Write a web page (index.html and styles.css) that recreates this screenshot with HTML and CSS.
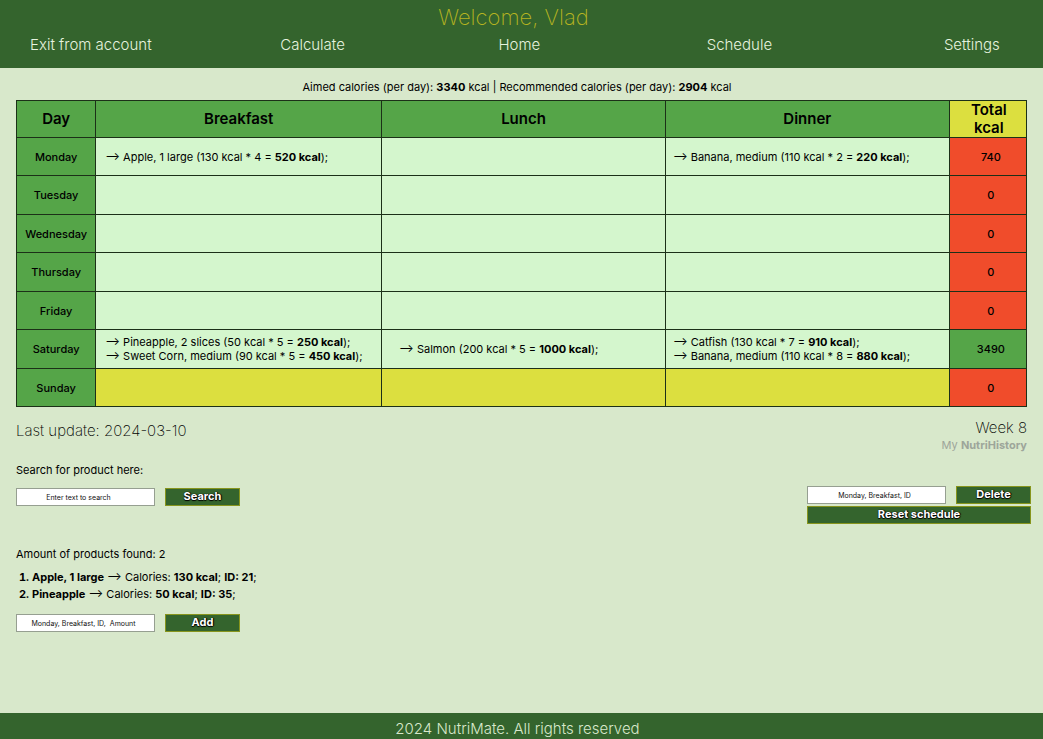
FILE: index.html
```html
<!DOCTYPE html>
<html lang="en">
<head>
<meta charset="utf-8">
<title>NutriMate</title>
<link rel="stylesheet" href="styles.css">
</head>
<body>
<header class="header">
  <h1 class="welcome">Welcome, Vlad</h1>
  <nav class="nav">
    <a href="#">Exit from account</a>
    <a href="#">Calculate</a>
    <a href="#">Home</a>
    <a href="#">Schedule</a>
    <a href="#">Settings</a>
  </nav>
</header>
<main class="main">
  <p class="goals">Aimed calories (per day): <b>3340</b> kcal | Recommended calories (per day): <b>2904</b> kcal</p>
  <table class="schedule">
    <colgroup><col class="col-day"><col class="col-breakfast"><col class="col-meal"><col class="col-meal"><col class="col-total"></colgroup>
    <thead>
      <tr><th scope="col">Day</th><th scope="col">Breakfast</th><th scope="col">Lunch</th><th scope="col">Dinner</th><th scope="col" class="total-head">Total kcal</th></tr>
    </thead>
    <tbody>
      <tr><th scope="row">Monday</th><td>⟶ Apple, 1 large (130 kcal * 4 = <b>520 kcal</b>);</td><td></td><td class="dinner">⟶ Banana, medium (110 kcal * 2 = <b>220 kcal</b>);</td><td class="total">740</td></tr>
      <tr><th scope="row">Tuesday</th><td></td><td></td><td></td><td class="total">0</td></tr>
      <tr><th scope="row">Wednesday</th><td></td><td></td><td></td><td class="total">0</td></tr>
      <tr><th scope="row">Thursday</th><td></td><td></td><td></td><td class="total">0</td></tr>
      <tr><th scope="row">Friday</th><td></td><td></td><td></td><td class="total">0</td></tr>
      <tr><th scope="row">Saturday</th><td>⟶ Pineapple, 2 slices (50 kcal * 5 = <b>250 kcal</b>);<br>⟶ Sweet Corn, medium (90 kcal * 5 = <b>450 kcal</b>);</td><td class="lunch">⟶ Salmon (200 kcal * 5 = <b>1000 kcal</b>);</td><td class="dinner">⟶ Catfish (130 kcal * 7 = <b>910 kcal</b>);<br>⟶ Banana, medium (110 kcal * 8 = <b>880 kcal</b>);</td><td class="total reached">3490</td></tr>
      <tr class="today"><th scope="row">Sunday</th><td></td><td></td><td></td><td class="total">0</td></tr>
    </tbody>
  </table>
  <div class="summary">
    <p class="updated">Last update: 2024-03-10</p>
    <div class="week">
      <p class="week-number">Week 8</p>
      <a class="history" href="#">My <b>NutriHistory</b></a>
    </div>
  </div>
  <div class="tools">
    <section class="products">
      <label class="caption" for="search">Search for product here:</label>
      <form class="form">
        <input class="field search-field" id="search" type="text" placeholder="Enter text to search">
        <button class="button" type="button">Search</button>
      </form>
      <p class="caption found">Amount of products found: 2</p>
      <ol class="results">
        <li><b>Apple, 1 large</b> ⟶ Calories: <b>130 kcal</b>; <b>ID: 21</b>;</li>
        <li><b>Pineapple</b> ⟶ Calories: <b>50 kcal</b>; <b>ID: 35</b>;</li>
      </ol>
      <form class="form">
        <input class="field" type="text" aria-label="Product to add" placeholder="Monday, Breakfast, ID,  Amount">
        <button class="button" type="button">Add</button>
      </form>
    </section>
    <section class="edit">
      <form class="form">
        <input class="field" type="text" aria-label="Product to delete" placeholder="Monday, Breakfast, ID">
        <button class="button" type="button">Delete</button>
      </form>
      <button class="button reset" type="button">Reset schedule</button>
    </section>
  </div>
</main>
<footer class="footer">2024 NutriMate. All rights reserved</footer>
</body>
</html>
```
FILE: styles.css
```css
* { box-sizing: border-box; }

body {
  margin: 0;
  min-height: 100vh;
  display: flex;
  flex-direction: column;
  background: #d8e8cb;
  color: #000;
  font-family: Inter, "Liberation Sans", sans-serif;
  font-size: 11px;
  line-height: 14px;
}

h1, p, ol { margin: 0; padding: 0; }
b { font-weight: 700; }
a { color: inherit; text-decoration: none; }

.header {
  background: #34642d;
  color: #e6f3df;
  padding: 3px 0 13px 30px;
}

.welcome {
  margin-right: 46px;
  text-align: center;
  color: #b5b321;
  font-size: 22px;
  line-height: 28px;
  font-weight: 200;
}

.nav {
  display: grid;
  grid-template-columns: 250fr 218fr 208fr 237fr 99fr;
  padding-top: 4px;
  font-size: 15px;
  line-height: 20px;
  font-weight: 300;
}

.main { flex: 1; padding: 12px 16px 0; }

.goals { text-align: center; padding: 0 9px 6px 0; }

.schedule {
  width: 100%;
  table-layout: fixed;
  border-collapse: collapse;
}

.col-day { width: 79px; }
.col-breakfast { width: 28.3%; }
.col-meal { width: 28.1%; }
.col-total { width: 77px; }

.schedule th, .schedule td {
  border: 1px solid #1c3018;
  padding: 0;
  height: 38px;
}

.schedule tbody tr:nth-child(even) > * { height: 39px; }
.schedule th { background: #55a548; font-weight: 500; }

.schedule thead th {
  height: 37px;
  font-size: 15px;
  line-height: 18px;
  font-weight: 600;
}

.schedule thead .total-head { background: #dcdf3f; padding: 0 14px 0 16px; }
.schedule td { background: #d4f6cd; padding-left: 9px; }
.schedule .lunch { padding-left: 17px; }
.schedule .dinner { padding-left: 7px; }
.schedule .today td { background: #dcdf3f; }

.schedule .total, .schedule .today .total {
  background: #f04c2b;
  padding: 0 0 0 6px;
  text-align: center;
  font-weight: 500;
}

.schedule .total.reached { background: #55a548; }

.summary {
  display: flex;
  justify-content: space-between;
  padding-top: 11px;
}

.updated, .week-number {
  font-size: 15px;
  line-height: 20px;
  font-weight: 200;
}

.updated { padding-top: 3px; }
.week { text-align: right; }
.history { color: #9da59a; }

.tools {
  display: flex;
  justify-content: space-between;
  align-items: flex-start;
  padding-top: 11px;
}

.caption { display: block; }
.form { display: flex; gap: 10px; }
.products .form { padding-top: 11px; }
.found { padding-top: 41px; }

.field {
  width: 139px;
  height: 18px;
  padding: 0 4px 0 0;
  border: 1px solid #969f91;
  background: #fff;
  text-align: center;
  font-family: inherit;
  font-size: 7px;
}

.search-field { padding-right: 14px; }
.field::placeholder { color: #111; opacity: 1; }

.button {
  width: 75px;
  height: 18px;
  padding: 0 0 2px;
  border: 1px solid #87951d;
  background: #34642d;
  color: #fff;
  font-family: inherit;
  font-size: 11px;
  line-height: 14px;
  font-weight: 700;
  text-shadow: 0 0 1px #000, 0 1px 1px #000, 1px 0 1px #000;
}

.results {
  padding: 8px 0 0 16px;
  line-height: 17px;
}

.results li::marker { font-weight: 700; }

.edit {
  display: flex;
  flex-direction: column;
  gap: 2px;
  margin-right: -4px;
  padding-top: 23px;
}

.reset { width: 100%; }

.footer {
  background: #34642d;
  color: #d8e8cb;
  padding: 6px 8px 0 0;
  text-align: center;
  font-size: 15px;
  line-height: 20px;
  font-weight: 300;
}
```
